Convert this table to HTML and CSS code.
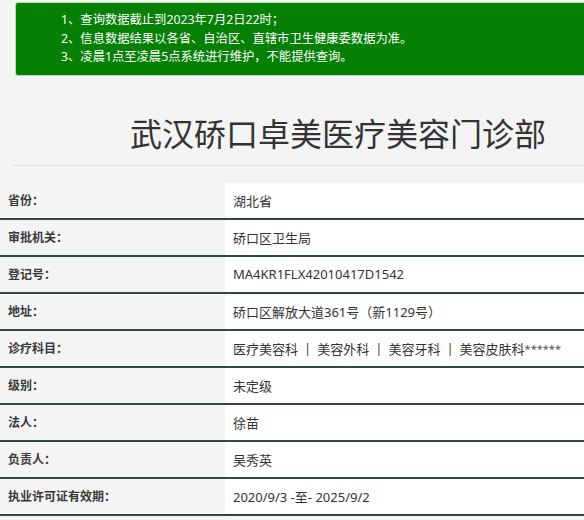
FILE: index.html
```html
<!DOCTYPE html>
<html lang="zh-CN">
<head>
<meta charset="utf-8">
<title>武汉硚口卓美医疗美容门诊部</title>
<link rel="stylesheet" href="styles.css">
</head>
<body>
<div class="page">
  <div class="notice">
    <p>1、查询数据截止到2023年7月2日22时；</p>
    <p>2、信息数据结果以各省、自治区、直辖市卫生健康委数据为准。</p>
    <p>3、凌晨1点至凌晨5点系统进行维护，不能提供查询。</p>
  </div>
  <h1 class="title">武汉硚口卓美医疗美容门诊部</h1>
  <div class="divider"></div>
  <div class="info">
    <div class="row"><div class="label">省份：</div><div class="value">湖北省</div></div>
    <div class="row"><div class="label">审批机关：</div><div class="value">硚口区卫生局</div></div>
    <div class="row"><div class="label">登记号：</div><div class="value">MA4KR1FLX42010417D1542</div></div>
    <div class="row"><div class="label">地址：</div><div class="value">硚口区解放大道361号（新1129号）</div></div>
    <div class="row"><div class="label">诊疗科目：</div><div class="value">医疗美容科<span class="sep">|</span>美容外科<span class="sep">|</span>美容牙科<span class="sep">|</span>美容皮肤科<span class="stars">******</span></div></div>
    <div class="row"><div class="label">级别：</div><div class="value">未定级</div></div>
    <div class="row"><div class="label">法人：</div><div class="value">徐苗</div></div>
    <div class="row"><div class="label">负责人：</div><div class="value">吴秀英</div></div>
    <div class="row"><div class="label">执业许可证有效期：</div><div class="value">2020/9/3 -至- 2025/9/2</div></div>
  </div>
</div>
</body>
</html>
```

FILE: styles.css
```css
html, body {
  margin: 0;
  padding: 0;
  background: #f4f4f4;
  overflow: hidden;
}
body {
  font-family: "Noto Sans", "Noto Sans CJK SC", sans-serif;
  color: #333;
}
.page {
  width: 584px;
  overflow: hidden;
  padding-top: 2px;
}
.notice {
  margin: 0 -8px 0 15px;
  padding: 8px 0 8px 45px;
  background: #058005;
  border: 1px solid #b8dcb8;
  border-radius: 3px;
  color: #fff;
  font-size: 12.3px;
  line-height: 18.5px;
}
.notice p {
  margin: 0;
}
.title {
  margin: 0;
  padding: 34px 0 0 92px;
  text-align: center;
  font-size: 32px;
  line-height: 44px;
  font-weight: normal;
  color: #333;
  font-family: "Noto Sans CJK SC", sans-serif;
  white-space: nowrap;
}
.divider {
  margin: 11px 0 0 13px;
  height: 1px;
  background: #e2e2e2;
}
.info {
  margin-top: 17px;
}
.row {
  display: flex;
  height: 35px;
  border-bottom: 2px solid #2e4c3e;
  align-items: stretch;
}
.label {
  width: 217px;
  flex: none;
  padding-left: 8px;
  display: flex;
  align-items: center;
  font-size: 12px;
  font-weight: bold;
  color: #3a3a3a;
  background: #f4f4f4;
}
.value {
  flex: 1;
  padding-left: 8px;
  display: flex;
  align-items: center;
  font-size: 13px;
  color: #333;
  background: #fff;
  white-space: pre;
}
.sep {
  margin: 0 6px;
  color: #444;
}
.stars {
  font-size: 11px;
  color: #555;
}
```
